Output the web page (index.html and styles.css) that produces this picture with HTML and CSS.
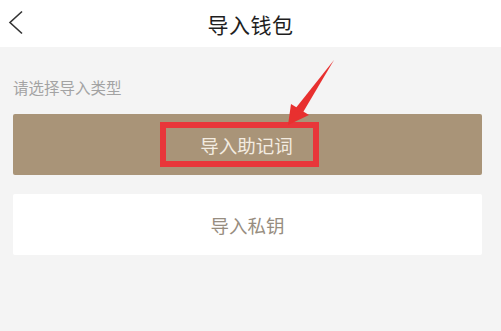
FILE: index.html
```html
<!DOCTYPE html>
<html lang="zh">
<head>
<meta charset="utf-8">
<link rel="stylesheet" href="styles.css">
</head>
<body>
<div class="page">
  <header class="topbar">
    <svg class="back" width="16" height="26" viewBox="0 0 16 26"><path d="M14 1.5 L2 12.5 L14 23.5" fill="none" stroke="#333" stroke-width="1.6"/></svg>
    <h1 class="title">导入钱包</h1>
  </header>
  <main class="content">
    <p class="label">请选择导入类型</p>
    <div class="btn btn-primary"><span class="mark">导入助记词</span></div>
    <div class="btn btn-secondary">导入私钥</div>
  </main>
  <svg class="arrow" width="70" height="70" viewBox="0 0 70 70">
    <polygon points="23,66 26,45 44,56" fill="#e8302f"/>
    <polygon points="69,1 30,50 37,55" fill="#e8302f"/>
  </svg>
</div>
</body>
</html>
```
FILE: styles.css
```css
html, body {
  margin: 0;
  padding: 0;
  background: #f4f4f4;
  font-family: "Noto Sans CJK SC", "Noto Sans", sans-serif;
}
.page {
  position: relative;
  width: 501px;
  height: 331px;
  overflow: hidden;
}
.topbar {
  position: relative;
  height: 47px;
  background: #ffffff;
  display: flex;
  align-items: center;
  justify-content: center;
}
.back {
  position: absolute;
  left: 8px;
  top: 10px;
}
.title {
  margin: 0;
  font-size: 21px;
  font-weight: 400;
  color: #1e1e1e;
  letter-spacing: 0.5px;
}
.content {
  padding: 0 19px 0 13px;
  display: flex;
  flex-direction: column;
}
.label {
  margin: 29px 0 0;
  font-size: 15.5px;
  line-height: 22px;
  color: #a3a3a3;
}
.btn {
  height: 61px;
  border-radius: 2px;
  display: flex;
  align-items: center;
  justify-content: center;
  font-size: 18.5px;
}
.btn-primary {
  margin-top: 16px;
  background: #a99478;
  color: #f3ece1;
}
.mark {
  box-sizing: border-box;
  width: 159px;
  height: 45px;
  border: 6px solid #e8363a;
  display: flex;
  align-items: center;
  justify-content: center;
  padding-left: 14px;
  margin-right: 16px;
}
.btn-secondary {
  margin-top: 19px;
  background: #ffffff;
  color: #978d80;
}
.arrow {
  position: absolute;
  left: 265px;
  top: 59px;
}
```
